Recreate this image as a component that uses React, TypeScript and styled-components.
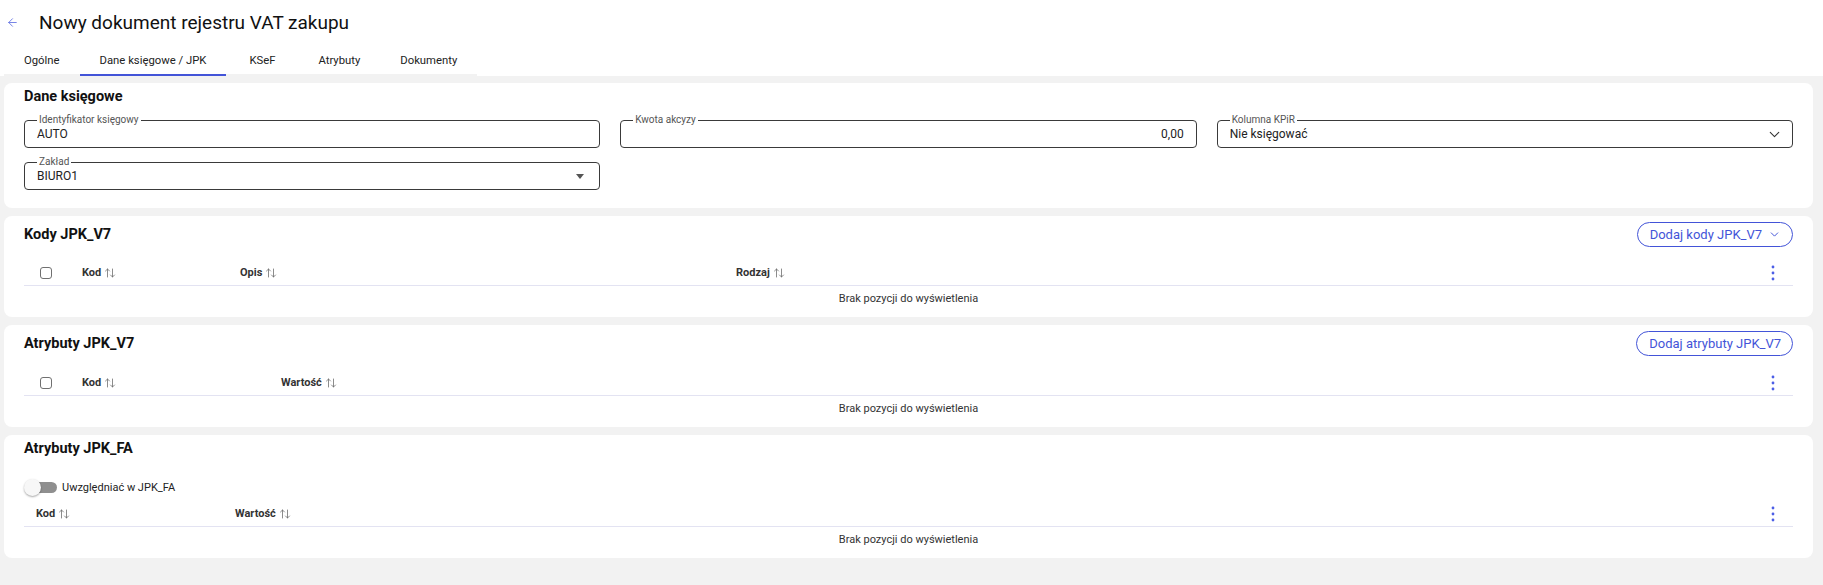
import styled, { createGlobalStyle } from 'styled-components';
import { ArrowLeft, ChevronDown, ArrowUpDown } from 'lucide-react';

const ACCENT = '#4354d8';

const GlobalStyle = createGlobalStyle`
  * { box-sizing: border-box; }
  body {
    margin: 0;
    background: #f2f2f2;
    color: #222;
    font-family: Roboto, 'Liberation Sans', sans-serif;
  }
`;

const Page = styled.div`
  min-height: 585px;
  background: #f2f2f2;
`;

const Header = styled.header`
  background: #fff;
  padding: 0 4px;
`;

const TitleRow = styled.div`
  display: flex;
  align-items: center;
  gap: 20px;
  height: 45px;
  padding-left: 2px;
`;

const BackButton = styled.button`
  display: flex;
  align-items: center;
  padding: 0;
  border: 0;
  background: none;
  color: #6372e2;
  cursor: pointer;
`;

const Title = styled.h1`
  margin: 0;
  font-size: 19px;
  font-weight: 400;
  color: #111;
`;

const TabBar = styled.nav`
  display: inline-flex;
  height: 31px;
  border-bottom: 2px solid #f2f2f2;
`;

const Tab = styled.button<{ $active?: boolean }>`
  min-width: 72px;
  padding: 2px 20px 0;
  margin-bottom: -2px;
  border: 0;
  border-bottom: 2px solid ${({ $active }) => ($active ? ACCENT : 'transparent')};
  background: none;
  font-family: inherit;
  font-size: 11.3px;
  font-weight: 400;
  color: #222;
  cursor: pointer;
`;

const Main = styled.main`
  display: flex;
  flex-direction: column;
  gap: 8px;
  padding: 7px 10px 20px 4px;
`;

const Card = styled.section`
  background: #fff;
  border-radius: 8px;
  padding: 4px 20px 7px;
`;

const CardHeader = styled.div<{ $height: number }>`
  display: flex;
  align-items: center;
  justify-content: space-between;
  min-height: ${({ $height }) => $height}px;
`;

const CardTitle = styled.h2`
  margin: 0;
  font-size: 14.5px;
  line-height: 20px;
  font-weight: 700;
  color: #111;
`;

const OutlineButton = styled.button`
  display: flex;
  align-items: center;
  gap: 6px;
  height: 25px;
  padding: 0 11px 0 12px;
  border: 1px solid ${ACCENT};
  border-radius: 13px;
  background: #fff;
  color: ${ACCENT};
  font-family: inherit;
  font-size: 13px;
  cursor: pointer;
`;

const FormGrid = styled.div`
  display: grid;
  grid-template-columns: repeat(3, 1fr);
  gap: 8px 20px;
  margin: 7px 0 11px;
`;

const Field = styled.fieldset`
  margin: 0;
  padding: 0 12px 5px;
  min-width: 0;
  border: 1px solid #3a3a3a;
  border-radius: 4px;
`;

const Legend = styled.legend`
  padding: 0 2px;
  font-size: 10px;
  line-height: 12px;
  color: #555;
`;

const FieldValue = styled.div<{ $align?: 'left' | 'right' }>`
  display: flex;
  align-items: center;
  justify-content: ${({ $align }) => ($align === 'right' ? 'flex-end' : 'space-between')};
  height: 16px;
  font-size: 12px;
  color: #222;

  svg {
    margin-right: -3px;
  }
`;

const Caret = styled.span`
  width: 0;
  height: 0;
  margin-right: 3px;
  border-left: 4px solid transparent;
  border-right: 4px solid transparent;
  border-top: 5px solid #555;
`;

const TableRow = styled.div<{ $cols: string }>`
  display: grid;
  grid-template-columns: ${({ $cols }) => $cols};
  align-items: center;
  height: 26px;
  border-bottom: 1px solid #e3e3f2;
`;

const HeadCell = styled.div`
  display: flex;
  align-items: center;
  gap: 3px;
  padding: 0 12px;
  font-size: 11px;
  font-weight: 700;
  color: #333;
`;

const CheckCell = styled.div`
  padding-left: 16px;
  display: flex;
  align-items: center;
`;

const Checkbox = styled.span`
  flex-shrink: 0;
  width: 12px;
  height: 12px;
  border: 1.5px solid #707070;
  border-radius: 3px;
`;

const MenuCell = styled.div`
  display: flex;
  justify-content: center;
`;

const EmptyRow = styled.div`
  height: 24px;
  display: flex;
  align-items: center;
  justify-content: center;
  font-size: 11px;
  color: #333;
`;

const TableWrap = styled.div<{ $gap: number }>`
  margin-top: ${({ $gap }) => $gap}px;
`;

const ToggleRow = styled.label`
  display: flex;
  align-items: center;
  gap: 5px;
  height: 24px;
  margin-top: 16px;
  font-size: 11px;
  color: #222;
`;

const Switch = styled.span`
  position: relative;
  width: 33px;
  height: 17px;
  display: inline-block;

  &::before {
    content: '';
    position: absolute;
    left: 4px;
    right: 0;
    top: 3px;
    height: 11px;
    border-radius: 6px;
    background: #8f8f8f;
  }
`;

const Thumb = styled.span`
  position: absolute;
  left: 0;
  top: 0;
  width: 17px;
  height: 17px;
  border-radius: 50%;
  background: #f7f7f7;
  box-shadow: 0 1px 2px rgba(0, 0, 0, 0.35);
`;

const Kebab = () => (
  <svg width='4' height='16' viewBox='0 0 4 16'>
    <circle cx='2' cy='2' r='1.4' fill='#4c5ee6' />
    <circle cx='2' cy='8' r='1.4' fill='#4c5ee6' />
    <circle cx='2' cy='14' r='1.4' fill='#4c5ee6' />
  </svg>
);

const SortHead = ({ label }: { label: string }) => (
  <HeadCell>
    {label}
    <ArrowUpDown size={12} strokeWidth={1.5} color='#666' />
  </HeadCell>
);

type TableProps = {
  cols: string;
  columns: string[];
  withCheckbox?: boolean;
  gap: number;
};

const DataTable = ({ cols, columns, withCheckbox, gap }: TableProps) => (
  <TableWrap $gap={gap}>
    <TableRow $cols={cols}>
      {withCheckbox && (
        <CheckCell>
          <Checkbox />
        </CheckCell>
      )}
      {columns.map((c) => (
        <SortHead key={c} label={c} />
      ))}
      <MenuCell>
        <Kebab />
      </MenuCell>
    </TableRow>
    <EmptyRow>Brak pozycji do wyświetlenia</EmptyRow>
  </TableWrap>
);

const tabs = ['Ogólne', 'Dane księgowe / JPK', 'KSeF', 'Atrybuty', 'Dokumenty'];

export default function App() {
  return (
    <Page>
      <GlobalStyle />
      <Header>
        <TitleRow>
          <BackButton>
            <ArrowLeft size={13} strokeWidth={1.6} />
          </BackButton>
          <Title>Nowy dokument rejestru VAT zakupu</Title>
        </TitleRow>
        <TabBar>
          {tabs.map((t, i) => (
            <Tab key={t} $active={i === 1}>
              {t}
            </Tab>
          ))}
        </TabBar>
      </Header>

      <Main>
        <Card>
          <CardHeader $height={20}>
            <CardTitle>Dane księgowe</CardTitle>
          </CardHeader>
          <FormGrid>
            <Field>
              <Legend>Identyfikator księgowy</Legend>
              <FieldValue>AUTO</FieldValue>
            </Field>
            <Field>
              <Legend>Kwota akcyzy</Legend>
              <FieldValue $align='right'>0,00</FieldValue>
            </Field>
            <Field>
              <Legend>Kolumna KPiR</Legend>
              <FieldValue>
                Nie księgować
                <ChevronDown size={17} strokeWidth={1.5} color='#333' />
              </FieldValue>
            </Field>
            <Field>
              <Legend>Zakład</Legend>
              <FieldValue>
                BIURO1
                <Caret />
              </FieldValue>
            </Field>
          </FormGrid>
        </Card>

        <Card>
          <CardHeader $height={29}>
            <CardTitle>Kody JPK_V7</CardTitle>
            <OutlineButton>
              Dodaj kody JPK_V7
              <ChevronDown size={13} strokeWidth={1.8} />
            </OutlineButton>
          </CardHeader>
          <DataTable
            gap={11}
            withCheckbox
            cols='46px 158px 496px 1fr 41px'
            columns={['Kod', 'Opis', 'Rodzaj']}
          />
        </Card>

        <Card>
          <CardHeader $height={29}>
            <CardTitle>Atrybuty JPK_V7</CardTitle>
            <OutlineButton>Dodaj atrybuty JPK_V7</OutlineButton>
          </CardHeader>
          <DataTable
            gap={12}
            withCheckbox
            cols='46px 199px 1fr 41px'
            columns={['Kod', 'Wartość']}
          />
        </Card>

        <Card>
          <CardHeader $height={18}>
            <CardTitle>Atrybuty JPK_FA</CardTitle>
          </CardHeader>
          <ToggleRow>
            <Switch>
              <Thumb />
            </Switch>
            Uwzględniać w JPK_FA
          </ToggleRow>
          <DataTable gap={2} cols='199px 1fr 41px' columns={['Kod', 'Wartość']} />
        </Card>
      </Main>
    </Page>
  );
}
